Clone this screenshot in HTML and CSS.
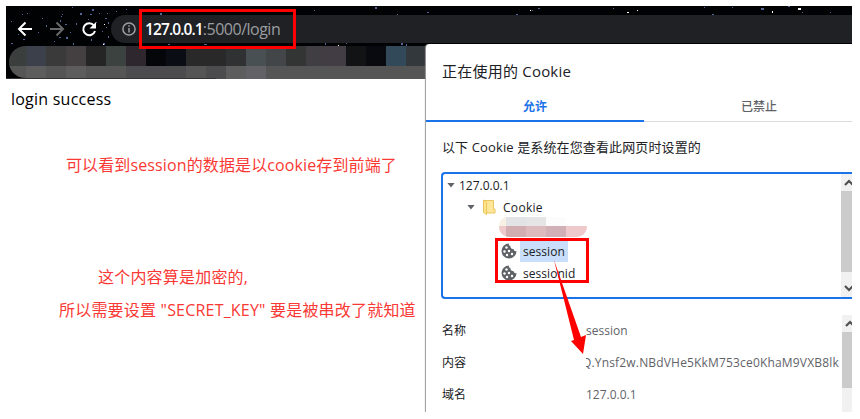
FILE: index.html
```html
<!DOCTYPE html>
<html lang="zh-CN">
<head>
<meta charset="utf-8">
<title>login</title>
<link rel="stylesheet" href="styles.css">
</head>
<body>
<main class="browser">
  <header class="chrome">
    <svg class="stars" width="846" height="73" aria-hidden="true">
      <g fill="#56679a"><path d="M16 8h1v1h-1zM56 8h1v1h-1zM55 10h1v1h-1zM74 7h2v2h-2zM86 3h2v2h-2zM93 7h1v1h-1zM101 7h1v1h-1zM110 5h1v1h-1zM154 7h2v2h-2zM5 15h1v1h-1zM21 7h1v1h-1zM40 19h1v2h-1zM32 26h1v1h-1zM17 33h2v1h-2zM60 31h2v2h-2zM67 37h1v2h-1zM97 37h2v2h-2zM102 30h1v2h-1zM100 21h1v1h-1zM90 16h1v1h-1zM70 17h1v2h-1zM5 37h2v1h-2zM48 35h1v1h-1zM162 38h2v1h-2zM198 38h3v1h-3zM308 4h1v1h-1zM369 1h2v2h-2zM391 8h1v1h-1zM421 6h2v1h-2zM510 8h2v1h-2zM532 2h2v1h-2zM526 4h1v1h-1zM607 2h1v1h-1zM698 1h1v1h-1zM706 8h2v1h-2zM726 1h1v1h-1zM755 2h3v2h-3zM782 0h2v1h-2zM796 6h1v1h-1zM824 6h1v1h-1zM319 37h1v2h-1zM395 37h2v2h-2zM400 38h1v2h-1zM340 37h1v1h-1zM54 14h1v2h-1zM66 1h1v1h-1zM84 8h2v1h-2zM82 13h1v1h-1zM99 12h2v1h-2zM50 22h1v2h-1zM64 26h1v1h-1zM53 31h2v1h-2zM59 18h2v1h-2zM102 16h1v2h-1zM96 25h1v1h-1zM12 28h1v1h-1zM36 12h1v1h-1zM85 33h1v2h-1zM120 3h1v1h-1zM135 6h1v1h-1z"/></g>
      <g fill="#fff"><path d="M98 18h1v1h-1zM97 38h1v1h-1zM332 39h1v1h-1zM524 4h1v1h-1zM631 4h1v1h-1zM621 6h2v1h-2zM766 5h1v2h-1zM792 2h3v2h-3z"/></g>
    </svg>
    <div class="toolbar">
      <svg class="nav" width="90" height="28" viewBox="12 15 90 28" fill="none" stroke-width="2">
        <path d="M32 29H19.500M25.500 22.500L19 29l6.500 6.500" stroke="#fff"/>
        <path d="M50 29h12.500M56.500 22.500L63 29l-6.500 6.500" stroke="#696969"/>
        <path d="M94 25.500A6 6 0 1 0 95 31" stroke="#fff"/><path d="M96 22v6.500h-6.500z" fill="#fff"/>
      </svg>
      <div class="omnibox">
        <svg width="14" height="14" viewBox="0 0 14 14" fill="none" stroke="#9aa0a6" stroke-width="1.500"><circle cx="7" cy="7" r="6.100"/><path d="M7 6v4.500M7 3.200v1.600"/></svg>
        <span class="url"><b>127.0.0.1</b>:5000/login</span>
      </div>
    </div>
    <svg class="bookmarks" width="417" height="33" viewBox="9 46 417 33" shape-rendering="crispEdges">
      <defs><clipPath id="pill"><path d="M426 46H26C15 46 9 54 9 62S15 78 26 78H216V79H426z"/></clipPath></defs>
      <g clip-path="url(#pill)">
        <path fill="#3a3f3e" d="M9 46h17v20H9z"/><path fill="#3c404b" d="M26 46h20v20H26z"/><path fill="#3a3a3b" d="M46 46h20v20H46z"/><path fill="#444041" d="M66 46h20v20H66z"/><path fill="#252525" d="M86 46h20v20H86z"/><path fill="#3b4240" d="M106 46h20v20h-20z"/><path fill="#2e272d" d="M126 46h20v20h-20z"/><path fill="#05060a" d="M146 46h20v20h-20z"/><path fill="#0a0e14" d="M166 46h20v20h-20z"/><path fill="#292929" d="M186 46h40v20h-40z"/><path fill="#303133" d="M226 46h20v20h-20z"/><path fill="#495053" d="M246 46h20v20h-20z"/><path fill="#434649" d="M266 46h20v20h-20z"/><path fill="#333534" d="M286 46h20v20h-20z"/><path fill="#403d43" d="M306 46h20v20h-20z"/><path fill="#423d45" d="M326 46h20v20h-20z"/><path fill="#121314" d="M346 46h20v20h-20z"/><path fill="#090a10" d="M366 46h20v20h-20z"/><path fill="#314958" d="M386 46h20v20h-20z"/><path fill="#33383c" d="M406 46h20v20h-20z"/>
        <path fill="#555556" d="M9 66h417v13H9z"/><path fill="#5d5d5e" d="M26 66h20v13H26zM66 66h20v13H66zM226 66h20v13h-20z"/><path fill="#4c4c4e" d="M126 66h60v13h-60zM206 66h20v13h-20z"/><path fill="#626266" d="M246 66h20v13h-20z"/>
      </g>
    </svg>
  </header>
  <section class="page">
    <p class="result">login success</p>
    <p class="note note-a">可以看到session的数据是以cookie存到前端了</p>
    <p class="note note-b">这个内容算是加密的,</p>
    <p class="note note-c">所以需要设置 "SECRET_KEY" 要是被串改了就知道</p>
  </section>
  <aside class="dialog">
    <h1>正在使用的 Cookie</h1>
    <nav class="tabs"><div class="tab active">允许</div><div class="tab">已禁止</div></nav>
    <p class="intro">以下 Cookie 是系统在您查看此网页时设置的</p>
    <div class="tree">
      <div class="rows">
        <div class="row host"><i class="caret"></i><span>127.0.0.1</span></div>
        <div class="row folder"><i class="caret"></i>
          <svg width="13" height="16" viewBox="0 0 13 16"><path d="M.5 1.500h10v8.500h1.500v4H3.500z" fill="#ffe699" stroke="#e9c65b"/><path d="M.5 1l3 2.500v12l-3-2z" fill="#ffe58c" stroke="#e9c65b"/></svg>
          <span>Cookie</span></div>
        <div class="row hidden-row"><svg width="88" height="20" viewBox="0 0 88 20" shape-rendering="crispEdges"><defs><clipPath id="blur"><path d="M7 0H88V9C88 16 83 20 77 20H11C5 20 0 16 0 10C0 4 3 1 7 0z"/></clipPath></defs><g clip-path="url(#blur)"><path fill="#f8f1e3" d="M0 0h7v9H0z"/><path fill="#e2e3e5" d="M7 0h20v9H7z"/><path fill="#e5e5e6" d="M27 0h20v9H27z"/><path fill="#fcfcfc" d="M47 0h20v9H47z"/><path fill="#efcacc" d="M0 9h88v11H0z"/><path fill="#d2adb2" d="M7 9h20v11H7z"/><path fill="#dcbabd" d="M27 9h20v11H27z"/><path fill="#d1b0b8" d="M47 9h20v11H47z"/></g></svg></div>
        <div class="row cookie selected"><svg width="16" height="16" viewBox="0 0 16 16"><path fill="#5f6368" d="M8 .5a7.500 7.500 0 1 0 7.500 7.500C14 8.500 12.500 7.500 12.500 6 10.500 6.500 9 4.500 9.500 3 8 3 7.500 2 8 .5z"/><g fill="#fff"><circle cx="5.500" cy="4.500" r="1.200"/><circle cx="3.500" cy="8.500" r="1.200"/><circle cx="8" cy="8" r="1.200"/><circle cx="6" cy="12" r="1.200"/><circle cx="11" cy="11" r="1.200"/></g></svg><span>session</span></div>
        <div class="row cookie"><svg width="16" height="16" viewBox="0 0 16 16"><path fill="#5f6368" d="M8 .5a7.500 7.500 0 1 0 7.500 7.500C14 8.500 12.500 7.500 12.500 6 10.500 6.500 9 4.500 9.500 3 8 3 7.500 2 8 .5z"/><g fill="#fff"><circle cx="5.500" cy="4.500" r="1.200"/><circle cx="3.500" cy="8.500" r="1.200"/><circle cx="8" cy="8" r="1.200"/><circle cx="6" cy="12" r="1.200"/><circle cx="11" cy="11" r="1.200"/></g></svg><span>sessionid</span></div>
      </div>
      <div class="scroll"><svg width="11" height="17" viewBox="0 0 11 17"><path d="M4 11l4-4 4 4" fill="none" stroke="#505050" stroke-width="2.200"/></svg><div class="thumb"></div><svg width="11" height="17" viewBox="0 0 11 17"><path d="M4 6l4 4 4-4" fill="none" stroke="#505050" stroke-width="2.200"/></svg></div>
    </div>
    <div class="details">
      <dl>
        <dt>名称</dt><dd>session</dd>
        <dt>内容</dt><dd class="clip"><span class="value">Q.Ynsf2w.NBdVHe5KkM753ce0KhaM9VXB8lk</span></dd>
        <dt>域名</dt><dd>127.0.0.1</dd>
      </dl>
      <div class="scroll lower"><svg width="10" height="17" viewBox="0 0 10 17"><path d="M4 11l4-4 4 4" fill="none" stroke="#505050" stroke-width="2.200"/></svg><div class="thumb"></div></div>
    </div>
  </aside>
</main>
<svg class="marks" width="860" height="419" aria-hidden="true">
  <path fill="none" stroke="#f00" stroke-width="3" d="M140.500 10.500h154v37h-154zM496.500 239.500h91v42h-91z"/>
  <path fill="#f00" d="M554 260L574 340 571 341 583 354 586 335 581 337z"/>
</svg>
</body>
</html>
```

FILE: styles.css
```css
* { box-sizing: border-box; }
body {
  margin: 0;
  width: 860px;
  height: 419px;
  overflow: hidden;
  background: #fff;
  color: #202124;
  font-family: "Open Sans", "Noto Sans CJK SC", sans-serif;
  font-size: 13px;
}
p, h1, dl, dd { margin: 0; }
svg { display: block; flex: none; }

.browser {
  display: grid;
  grid-template: 38px 35px 333px / 420px 426px;
  margin: 6px;
  width: 846px;
  height: 406px;
}
.chrome { grid-area: 1 / 1 / 3 / 3; position: relative; background: #010204; border-bottom: 1px solid #333; }
.stars { position: absolute; left: 0; top: 0; }
.toolbar { position: relative; display: flex; padding: 9px 0 0 6px; height: 40px; }
.nav { margin-right: 9px; }
.omnibox {
  flex: 1;
  display: flex;
  align-items: center;
  gap: 9px;
  height: 28px;
  padding-left: 11px;
  border-radius: 14px 0 0 14px;
  background: #202124;
}
.url { color: #9a9da0; font-size: 16px; line-height: 28px; letter-spacing: -0.5px; white-space: nowrap; }
.url b { color: #fff; font-size: 15.5px; font-weight: 600; letter-spacing: -0.9px; }
.bookmarks { position: relative; margin-left: 3px; }

.page { grid-area: 3 / 1; color: #000; }
.result { padding: 8px 0 0 5px; font-size: 16px; line-height: 24px; letter-spacing: 0.23px; }
.note { color: #fa3834; font-size: 16px; line-height: 24px; letter-spacing: 0.2px; white-space: nowrap; }
.note-a { margin: 42px 0 0 60px; letter-spacing: 0.12px; }
.note-b { margin: 88px 0 0 92px; }
.note-c { margin: 9px 0 0 53px; }

.dialog {
  grid-area: 2 / 2 / 4 / 3;
  position: relative;
  background: #fff;
  border-radius: 4px 0 0 0;
  box-shadow: -1px 0 1px #999;
  overflow: hidden;
  clip-path: inset(0 0 0 -3px);
}
h1 { padding: 15px 0 0 16px; font-size: 15px; line-height: 24px; font-weight: 400; letter-spacing: 0.22px; }
.tabs { display: flex; margin-top: 9px; height: 30px; border-bottom: 1px solid #dadce0; }
.tab { flex: none; width: 218px; height: 30px; padding-left: 12px; text-align: center; font-size: 12px; line-height: 30px; font-weight: 500; color: #5f6368; }
.tab.active { padding-left: 0; color: #1a73e8; font-weight: 700; border-bottom: 2px solid #1a73e8; }
.intro { padding: 13px 0 0 16px; line-height: 24px; letter-spacing: 0.12px; white-space: nowrap; }
.tree {
  display: flex;
  margin: 13px 0 0 15px;
  height: 127px;
  border: 2px solid #1a73e8;
  border-right: 0;
  border-radius: 4px 0 0 4px;
}
.rows { flex: 1; }
.row { display: flex; align-items: center; height: 22px; font-size: 12px; }
.host { padding-left: 4px; }
.host span { margin-left: 4px; }
.folder { padding-left: 24px; letter-spacing: 0.3px; }
.folder svg { margin: 0 7px 0 8px; }
.caret { width: 8px; height: 5px; background: #5f6368; clip-path: polygon(0 0, 100% 0, 50% 100%); }
.hidden-row { padding-left: 56px; }
.hidden-row svg { margin-top: -4px; }
.cookie { padding-left: 58px; letter-spacing: 0.05px; }
.cookie span { margin-left: 3px; padding: 0 3px; line-height: 21px; }
.selected span { background: #c8defa; }
.scroll { display: flex; flex-direction: column; width: 11px; background: #f1f1f1; }
.thumb { height: 81px; background: #cbcbcb; }
.scroll svg:last-child { margin-top: auto; }
.details { display: flex; margin-top: 16px; height: 97px; }
dl { flex: 1; display: grid; grid-template: repeat(3, 32px) / 144px 1fr; padding-left: 16px; }
dt, dd { line-height: 32px; font-size: 12px; white-space: nowrap; }
dd { color: #5f6368; }
.clip { overflow: hidden; }
.value { display: inline-block; margin-left: -4px; letter-spacing: 0.17px; }
.lower { width: 10px; }
.lower .thumb { height: 56px; }

.marks { position: absolute; left: 0; top: 0; }
```
